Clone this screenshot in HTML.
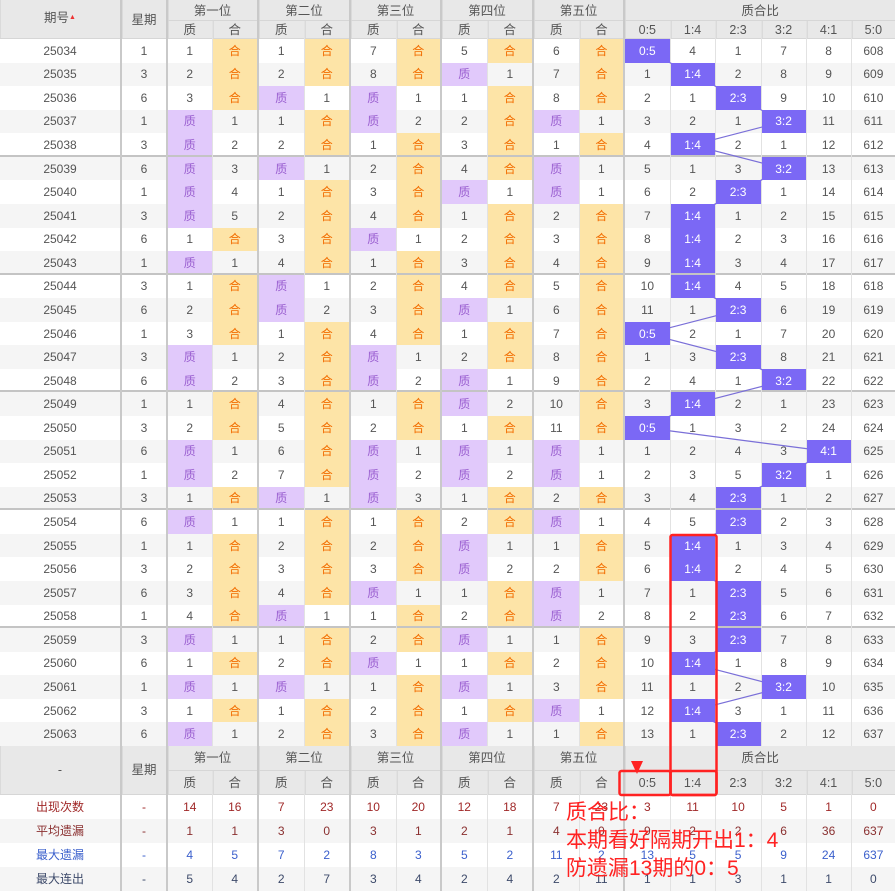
<!DOCTYPE html>
<html><head><meta charset="utf-8">
<style>
body{margin:0;width:895px;height:891px;overflow:hidden;background:#fff;position:relative}
table{border-collapse:collapse;table-layout:fixed;width:895px;position:absolute;left:0;top:0;font:12px/14px "Liberation Sans","Noto Sans CJK SC",sans-serif;color:#555}
td,th{padding:0;text-align:center;height:23.57px;overflow:hidden;white-space:nowrap;font-weight:normal;line-height:14px}
tr{height:23.57px}
col{border-left:1px solid #e2e2e2}
col.g{border-left:2px solid #c9c9c9}
.hd th{height:auto;background:#e8e8e8;color:#555;font-size:12.5px;box-shadow:inset 0 -1px #d6d6d6, inset 1px 0 #dadada}
.hd th.g{border-left:2px solid #c9c9c9}
tr.a td{background:#f5f5f5}
tr.s td{box-shadow:inset 0 -2px #c4c4c4}
td.q,tr.a td.q{background:#e1c9fb;color:#9a5fd0}
td.h,tr.a td.h{background:#fde4a7;color:#f26d00}
td.r,tr.a td.r{background:#7b68f5;color:#fff;position:relative;z-index:2}
.c1 td{color:#a02828}.c2 td{color:#8a3030}.c3 td{color:#3a5fcc}.c4 td{color:#3d4a6a}
tr.c1,tr.c2,tr.c3,tr.c4{height:24px}
.c1 td,.c2 td,.c3 td,.c4 td{height:24px}
.sort{font-size:7px;color:#e33;position:relative;top:-3px}
</style></head><body>
<table>
<colgroup><col style="width:121px;border-left:none"><col class="g" style="width:46px"><col class="g" style="width:45px"><col style="width:46px"><col class="g" style="width:46px"><col style="width:46px"><col class="g" style="width:46px"><col style="width:45px"><col class="g" style="width:46px"><col style="width:46px"><col class="g" style="width:46px"><col style="width:45px"><col class="g" style="width:46px"><col style="width:45px"><col style="width:46px"><col style="width:45px"><col style="width:45px"><col style="width:44px"></colgroup>
<tr class="hd" style="height:21px"><th rowspan="2">期号<span class="sort">▲</span></th><th rowspan="2" class="g">星期</th><th colspan="2" class="g" style="height:21px">第一位</th><th colspan="2" class="g">第二位</th><th colspan="2" class="g">第三位</th><th colspan="2" class="g">第四位</th><th colspan="2" class="g">第五位</th><th colspan="6" class="g">质合比</th></tr>
<tr class="hd" style="height:18px"><th class="g" style="height:18px">质</th><th>合</th><th class="g">质</th><th>合</th><th class="g">质</th><th>合</th><th class="g">质</th><th>合</th><th class="g">质</th><th>合</th><th class="g">0:5</th><th>1:4</th><th>2:3</th><th>3:2</th><th>4:1</th><th>5:0</th></tr>
<tr><td>25034</td><td>1</td><td>1</td><td class=h>合</td><td>1</td><td class=h>合</td><td>7</td><td class=h>合</td><td>5</td><td class=h>合</td><td>6</td><td class=h>合</td><td class=r>0:5</td><td>4</td><td>1</td><td>7</td><td>8</td><td>608</td></tr>
<tr class=a><td>25035</td><td>3</td><td>2</td><td class=h>合</td><td>2</td><td class=h>合</td><td>8</td><td class=h>合</td><td class=q>质</td><td>1</td><td>7</td><td class=h>合</td><td>1</td><td class=r>1:4</td><td>2</td><td>8</td><td>9</td><td>609</td></tr>
<tr><td>25036</td><td>6</td><td>3</td><td class=h>合</td><td class=q>质</td><td>1</td><td class=q>质</td><td>1</td><td>1</td><td class=h>合</td><td>8</td><td class=h>合</td><td>2</td><td>1</td><td class=r>2:3</td><td>9</td><td>10</td><td>610</td></tr>
<tr class=a><td>25037</td><td>1</td><td class=q>质</td><td>1</td><td>1</td><td class=h>合</td><td class=q>质</td><td>2</td><td>2</td><td class=h>合</td><td class=q>质</td><td>1</td><td>3</td><td>2</td><td>1</td><td class=r>3:2</td><td>11</td><td>611</td></tr>
<tr class=s><td>25038</td><td>3</td><td class=q>质</td><td>2</td><td>2</td><td class=h>合</td><td>1</td><td class=h>合</td><td>3</td><td class=h>合</td><td>1</td><td class=h>合</td><td>4</td><td class=r>1:4</td><td>2</td><td>1</td><td>12</td><td>612</td></tr>
<tr class=a><td>25039</td><td>6</td><td class=q>质</td><td>3</td><td class=q>质</td><td>1</td><td>2</td><td class=h>合</td><td>4</td><td class=h>合</td><td class=q>质</td><td>1</td><td>5</td><td>1</td><td>3</td><td class=r>3:2</td><td>13</td><td>613</td></tr>
<tr><td>25040</td><td>1</td><td class=q>质</td><td>4</td><td>1</td><td class=h>合</td><td>3</td><td class=h>合</td><td class=q>质</td><td>1</td><td class=q>质</td><td>1</td><td>6</td><td>2</td><td class=r>2:3</td><td>1</td><td>14</td><td>614</td></tr>
<tr class=a><td>25041</td><td>3</td><td class=q>质</td><td>5</td><td>2</td><td class=h>合</td><td>4</td><td class=h>合</td><td>1</td><td class=h>合</td><td>2</td><td class=h>合</td><td>7</td><td class=r>1:4</td><td>1</td><td>2</td><td>15</td><td>615</td></tr>
<tr><td>25042</td><td>6</td><td>1</td><td class=h>合</td><td>3</td><td class=h>合</td><td class=q>质</td><td>1</td><td>2</td><td class=h>合</td><td>3</td><td class=h>合</td><td>8</td><td class=r>1:4</td><td>2</td><td>3</td><td>16</td><td>616</td></tr>
<tr class="a s"><td>25043</td><td>1</td><td class=q>质</td><td>1</td><td>4</td><td class=h>合</td><td>1</td><td class=h>合</td><td>3</td><td class=h>合</td><td>4</td><td class=h>合</td><td>9</td><td class=r>1:4</td><td>3</td><td>4</td><td>17</td><td>617</td></tr>
<tr><td>25044</td><td>3</td><td>1</td><td class=h>合</td><td class=q>质</td><td>1</td><td>2</td><td class=h>合</td><td>4</td><td class=h>合</td><td>5</td><td class=h>合</td><td>10</td><td class=r>1:4</td><td>4</td><td>5</td><td>18</td><td>618</td></tr>
<tr class=a><td>25045</td><td>6</td><td>2</td><td class=h>合</td><td class=q>质</td><td>2</td><td>3</td><td class=h>合</td><td class=q>质</td><td>1</td><td>6</td><td class=h>合</td><td>11</td><td>1</td><td class=r>2:3</td><td>6</td><td>19</td><td>619</td></tr>
<tr><td>25046</td><td>1</td><td>3</td><td class=h>合</td><td>1</td><td class=h>合</td><td>4</td><td class=h>合</td><td>1</td><td class=h>合</td><td>7</td><td class=h>合</td><td class=r>0:5</td><td>2</td><td>1</td><td>7</td><td>20</td><td>620</td></tr>
<tr class=a><td>25047</td><td>3</td><td class=q>质</td><td>1</td><td>2</td><td class=h>合</td><td class=q>质</td><td>1</td><td>2</td><td class=h>合</td><td>8</td><td class=h>合</td><td>1</td><td>3</td><td class=r>2:3</td><td>8</td><td>21</td><td>621</td></tr>
<tr class=s><td>25048</td><td>6</td><td class=q>质</td><td>2</td><td>3</td><td class=h>合</td><td class=q>质</td><td>2</td><td class=q>质</td><td>1</td><td>9</td><td class=h>合</td><td>2</td><td>4</td><td>1</td><td class=r>3:2</td><td>22</td><td>622</td></tr>
<tr class=a><td>25049</td><td>1</td><td>1</td><td class=h>合</td><td>4</td><td class=h>合</td><td>1</td><td class=h>合</td><td class=q>质</td><td>2</td><td>10</td><td class=h>合</td><td>3</td><td class=r>1:4</td><td>2</td><td>1</td><td>23</td><td>623</td></tr>
<tr><td>25050</td><td>3</td><td>2</td><td class=h>合</td><td>5</td><td class=h>合</td><td>2</td><td class=h>合</td><td>1</td><td class=h>合</td><td>11</td><td class=h>合</td><td class=r>0:5</td><td>1</td><td>3</td><td>2</td><td>24</td><td>624</td></tr>
<tr class=a><td>25051</td><td>6</td><td class=q>质</td><td>1</td><td>6</td><td class=h>合</td><td class=q>质</td><td>1</td><td class=q>质</td><td>1</td><td class=q>质</td><td>1</td><td>1</td><td>2</td><td>4</td><td>3</td><td class=r>4:1</td><td>625</td></tr>
<tr><td>25052</td><td>1</td><td class=q>质</td><td>2</td><td>7</td><td class=h>合</td><td class=q>质</td><td>2</td><td class=q>质</td><td>2</td><td class=q>质</td><td>1</td><td>2</td><td>3</td><td>5</td><td class=r>3:2</td><td>1</td><td>626</td></tr>
<tr class="a s"><td>25053</td><td>3</td><td>1</td><td class=h>合</td><td class=q>质</td><td>1</td><td class=q>质</td><td>3</td><td>1</td><td class=h>合</td><td>2</td><td class=h>合</td><td>3</td><td>4</td><td class=r>2:3</td><td>1</td><td>2</td><td>627</td></tr>
<tr><td>25054</td><td>6</td><td class=q>质</td><td>1</td><td>1</td><td class=h>合</td><td>1</td><td class=h>合</td><td>2</td><td class=h>合</td><td class=q>质</td><td>1</td><td>4</td><td>5</td><td class=r>2:3</td><td>2</td><td>3</td><td>628</td></tr>
<tr class=a><td>25055</td><td>1</td><td>1</td><td class=h>合</td><td>2</td><td class=h>合</td><td>2</td><td class=h>合</td><td class=q>质</td><td>1</td><td>1</td><td class=h>合</td><td>5</td><td class=r>1:4</td><td>1</td><td>3</td><td>4</td><td>629</td></tr>
<tr><td>25056</td><td>3</td><td>2</td><td class=h>合</td><td>3</td><td class=h>合</td><td>3</td><td class=h>合</td><td class=q>质</td><td>2</td><td>2</td><td class=h>合</td><td>6</td><td class=r>1:4</td><td>2</td><td>4</td><td>5</td><td>630</td></tr>
<tr class=a><td>25057</td><td>6</td><td>3</td><td class=h>合</td><td>4</td><td class=h>合</td><td class=q>质</td><td>1</td><td>1</td><td class=h>合</td><td class=q>质</td><td>1</td><td>7</td><td>1</td><td class=r>2:3</td><td>5</td><td>6</td><td>631</td></tr>
<tr class=s><td>25058</td><td>1</td><td>4</td><td class=h>合</td><td class=q>质</td><td>1</td><td>1</td><td class=h>合</td><td>2</td><td class=h>合</td><td class=q>质</td><td>2</td><td>8</td><td>2</td><td class=r>2:3</td><td>6</td><td>7</td><td>632</td></tr>
<tr class=a><td>25059</td><td>3</td><td class=q>质</td><td>1</td><td>1</td><td class=h>合</td><td>2</td><td class=h>合</td><td class=q>质</td><td>1</td><td>1</td><td class=h>合</td><td>9</td><td>3</td><td class=r>2:3</td><td>7</td><td>8</td><td>633</td></tr>
<tr><td>25060</td><td>6</td><td>1</td><td class=h>合</td><td>2</td><td class=h>合</td><td class=q>质</td><td>1</td><td>1</td><td class=h>合</td><td>2</td><td class=h>合</td><td>10</td><td class=r>1:4</td><td>1</td><td>8</td><td>9</td><td>634</td></tr>
<tr class=a><td>25061</td><td>1</td><td class=q>质</td><td>1</td><td class=q>质</td><td>1</td><td>1</td><td class=h>合</td><td class=q>质</td><td>1</td><td>3</td><td class=h>合</td><td>11</td><td>1</td><td>2</td><td class=r>3:2</td><td>10</td><td>635</td></tr>
<tr><td>25062</td><td>3</td><td>1</td><td class=h>合</td><td>1</td><td class=h>合</td><td>2</td><td class=h>合</td><td>1</td><td class=h>合</td><td class=q>质</td><td>1</td><td>12</td><td class=r>1:4</td><td>3</td><td>1</td><td>11</td><td>636</td></tr>
<tr class=a><td>25063</td><td>6</td><td class=q>质</td><td>1</td><td>2</td><td class=h>合</td><td>3</td><td class=h>合</td><td class=q>质</td><td>1</td><td>1</td><td class=h>合</td><td>13</td><td>1</td><td class=r>2:3</td><td>2</td><td>12</td><td>637</td></tr>
<tr class="hd" style="height:25px"><th rowspan="2">-</th><th rowspan="2" class="g">星期</th><th colspan="2" class="g" style="height:25px">第一位</th><th colspan="2" class="g">第二位</th><th colspan="2" class="g">第三位</th><th colspan="2" class="g">第四位</th><th colspan="2" class="g">第五位</th><th colspan="6" class="g">质合比</th></tr>
<tr class="hd" style="height:24px"><th class="g" style="height:24px">质</th><th>合</th><th class="g">质</th><th>合</th><th class="g">质</th><th>合</th><th class="g">质</th><th>合</th><th class="g">质</th><th>合</th><th class="g">0:5</th><th>1:4</th><th>2:3</th><th>3:2</th><th>4:1</th><th>5:0</th></tr>
<tr class="c1"><td>出现次数</td><td>-</td><td>14</td><td>16</td><td>7</td><td>23</td><td>10</td><td>20</td><td>12</td><td>18</td><td>7</td><td>23</td><td>3</td><td>11</td><td>10</td><td>5</td><td>1</td><td>0</td></tr>
<tr class="a c2"><td>平均遗漏</td><td>-</td><td>1</td><td>1</td><td>3</td><td>0</td><td>3</td><td>1</td><td>2</td><td>1</td><td>4</td><td>0</td><td>9</td><td>2</td><td>2</td><td>6</td><td>36</td><td>637</td></tr>
<tr class="c3"><td>最大遗漏</td><td>-</td><td>4</td><td>5</td><td>7</td><td>2</td><td>8</td><td>3</td><td>5</td><td>2</td><td>11</td><td>2</td><td>13</td><td>5</td><td>5</td><td>9</td><td>24</td><td>637</td></tr>
<tr class="a c4"><td>最大连出</td><td>-</td><td>5</td><td>4</td><td>2</td><td>7</td><td>3</td><td>4</td><td>2</td><td>4</td><td>2</td><td>11</td><td>1</td><td>1</td><td>3</td><td>1</td><td>1</td><td>0</td></tr>
</table>
<svg width="895" height="891" style="position:absolute;left:0;top:0;z-index:1" xmlns="http://www.w3.org/2000/svg">
<polyline fill="none" stroke="#7a6fd8" stroke-width="1.2" points="647,50.8 692.5,74.4 738,97.9 783.5,121.5 692.5,145.1 783.5,168.6 738,192.2 692.5,215.8 692.5,239.3 692.5,262.9 692.5,286.5 738,310.1 647,333.6 738,357.2 783.5,380.8 692.5,404.3 647,427.9 828.5,451.5 783.5,475 738,498.6 738,522.2 692.5,545.8 692.5,569.3 738,592.9 738,616.5 738,640 692.5,663.6 783.5,687.2 692.5,710.7 738,734.3"/>
</svg>
<svg width="895" height="891" style="position:absolute;left:0;top:0;z-index:3" xmlns="http://www.w3.org/2000/svg">
<defs><linearGradient id="fd" x1="0" y1="0" x2="0" y2="1"><stop offset="0" stop-color="#f22" stop-opacity="0"/><stop offset="0.3" stop-color="#f22" stop-opacity="1"/></linearGradient></defs>
<rect x="670.5" y="535" width="46" height="260" rx="2" fill="none" stroke="#f22" stroke-width="2.5"/>
<rect x="619.5" y="771" width="51" height="24" rx="2" fill="none" stroke="#f22" stroke-width="2.5"/>
<rect x="670.5" y="771" width="46" height="24" rx="2" fill="none" stroke="#f22" stroke-width="2.5"/>
<line x1="637" y1="440" x2="637" y2="764" stroke="url(#fd)" stroke-width="2.5"/>
<polygon points="631,761 643,761 637,774" fill="#f22"/>
</svg>
<div style="position:absolute;z-index:4;left:566px;top:799px;font:21px/28px 'Liberation Sans','Noto Sans CJK SC',sans-serif;color:#f22;white-space:nowrap">质合比：<br>本期看好隔期开出1：4<br>防遗漏13期的0：5</div>
</body></html>
